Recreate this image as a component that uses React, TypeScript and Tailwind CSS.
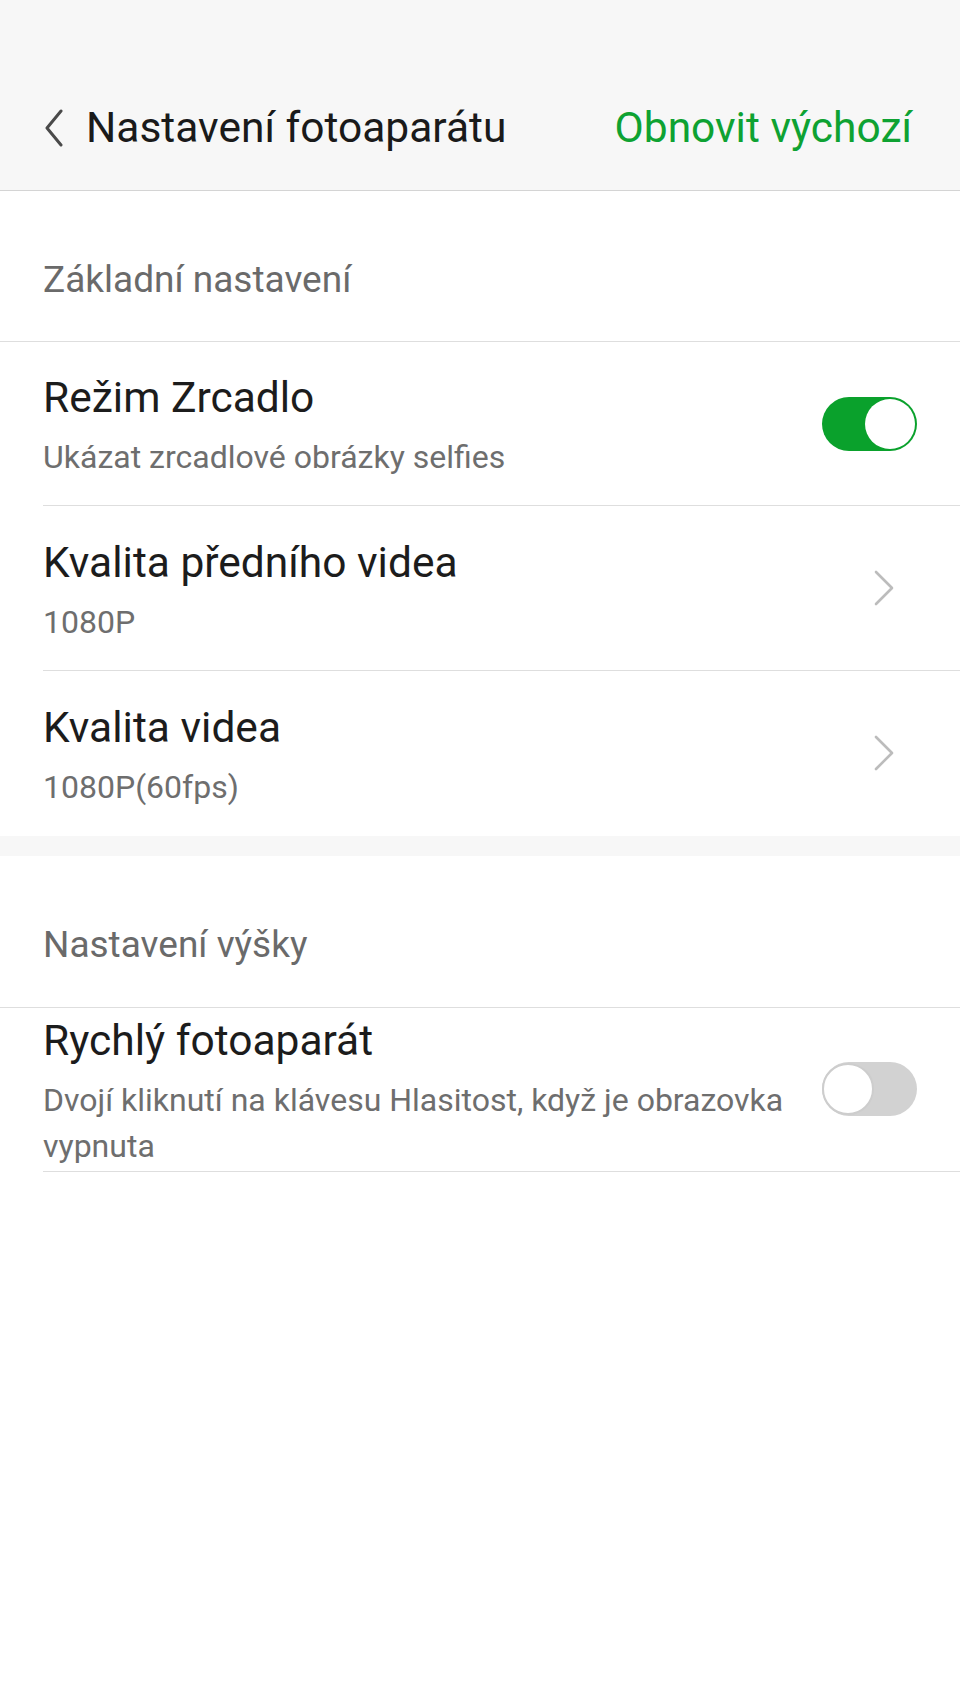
import React from "react";

type Row = {
  title: string;
  subtitle: string;
  kind: "toggle" | "link";
  on?: boolean;
};

function Toggle({ on }: { on: boolean }) {
  return on ? (
    <div className="mb-[6px] flex h-[54px] w-[95px] shrink-0 items-center justify-end rounded-full bg-[#0aa12c] p-[2px]">
      <div className="h-[50px] w-[50px] rounded-full bg-white" />
    </div>
  ) : (
    <div className="mb-[8px] flex h-[54px] w-[95px] shrink-0 items-center justify-start rounded-full bg-[#d2d2d2]">
      <div className="h-[52px] w-[52px] rounded-full border-[2px] border-[#cdcdcd] bg-white" />
    </div>
  );
}

function Chevron() {
  return (
    <svg width="22" height="36" viewBox="0 0 22 36" className="mb-[8px] mr-[22px] shrink-0">
      <polyline
        points="3,2 19,18 3,34"
        fill="none"
        stroke="#bcbcbc"
        strokeWidth="2.6"
        strokeLinecap="round"
        strokeLinejoin="round"
      />
    </svg>
  );
}

function SettingRow({ row, last, pad }: { row: Row; last?: boolean; pad: string }) {
  return (
    <div className="pl-[43px]">
      <div
        className={`flex items-center pr-[43px] ${pad} ${last ? "" : "border-b border-[#dedede]"}`}
      >
        <div className="mr-[28px] min-w-0 flex-1">
          <div className="text-[42.5px] leading-[50px] text-[#1c1c1c]">{row.title}</div>
          <div className="mt-[11px] text-[32px] leading-[46px] text-[#6e6e6e]">{row.subtitle}</div>
        </div>
        {row.kind === "toggle" ? <Toggle on={!!row.on} /> : <Chevron />}
      </div>
    </div>
  );
}

function SectionHeader({ label, pad }: { label: string; pad: string }) {
  return (
    <div className={`border-b border-[#dedede] px-[43px] ${pad}`}>
      <div className="text-[37px] leading-[44px] text-[#6a6a6a]">{label}</div>
    </div>
  );
}

export default function App() {
  const basic: Row[] = [
    { title: "Režim Zrcadlo", subtitle: "Ukázat zrcadlové obrázky selfies", kind: "toggle", on: true },
    { title: "Kvalita předního videa", subtitle: "1080P", kind: "link" },
    { title: "Kvalita videa", subtitle: "1080P(60fps)", kind: "link" },
  ];

  return (
    <div className="min-h-screen bg-white" style={{ fontFamily: "Roboto, 'Noto Sans', sans-serif" }}>
      {/* top bar */}
      <div className="flex h-[191px] items-center justify-between border-b border-[#d4d4d4] bg-[#f7f7f7] pl-[44px] pr-[48px] pt-[66px]">
        <div className="flex items-center">
          <svg width="20" height="38" viewBox="0 0 20 38" className="mr-[22px]">
            <polyline
              points="17,2 3,19 17,36"
              fill="none"
              stroke="#4a4a4a"
              strokeWidth="3"
              strokeLinecap="round"
              strokeLinejoin="round"
            />
          </svg>
          <span className="text-[42.5px] leading-[50px] text-[#1a1a1a]">Nastavení fotoaparátu</span>
        </div>
        <span className="text-[42.5px] leading-[50px] text-[#0ea232]">Obnovit výchozí</span>
      </div>

      <SectionHeader label="Základní nastavení" pad="pt-[67px] pb-[39px]" />
      <SettingRow row={basic[0]} pad="pt-[31px] pb-[25px]" />
      <SettingRow row={basic[1]} pad="pt-[32px] pb-[25px]" />
      <SettingRow row={basic[2]} pad="pt-[32px] pb-[26px]" last />

      <div className="h-[20px] bg-[#f7f7f7]" />

      <SectionHeader label="Nastavení výšky" pad="pt-[67px] pb-[40px]" />
      <SettingRow
        row={{
          title: "Rychlý fotoaparát",
          subtitle: "Dvojí kliknutí na klávesu Hlasitost, když je obrazovka vypnuta",
          kind: "toggle",
          on: false,
        }}
        pad="pt-[8px] pb-[2px]"
      />
    </div>
  );
}
